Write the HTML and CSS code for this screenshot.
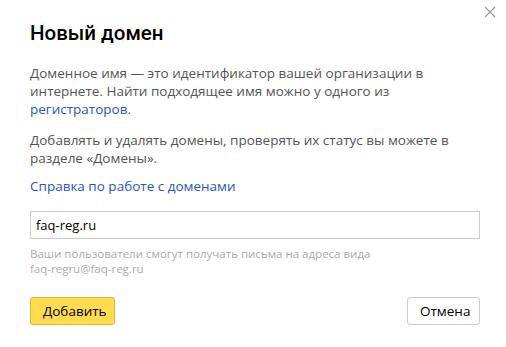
FILE: index.html
```html
<!DOCTYPE html>
<html lang="ru">
<head>
    <meta charset="UTF-8">
    <meta name="viewport" content="width=device-width, initial-scale=1.0">
    <title>Новый домен</title>
    <link rel="stylesheet" href="styles.css">
</head>
<body>
  <div class="dialog">
    <span class="close" title="Закрыть">
      <svg width="12" height="12" viewBox="0 0 12 12"><path d="M1 1L11 11M11 1L1 11" stroke="#999" stroke-width="1.1"/></svg>
    </span>
    <h1 class="title">Новый домен</h1>
    <p class="text">Доменное имя — это идентификатор вашей организации в интернете. Найти подходящее имя можно у одного из <a href="#">регистраторов</a>.</p>
    <p class="text">Добавлять и удалять домены, проверять их статус вы можете в разделе «Домены».</p>
    <p class="text help"><a href="#">Справка по работе с доменами</a></p>
    <input class="field" type="text" value="faq-reg.ru">
    <div class="hint">Ваши пользователи смогут получать письма на адреса вида<br>faq-regru@faq-reg.ru</div>
    <div class="actions">
      <button class="btn btn-add">Добавить</button>
      <button class="btn btn-cancel">Отмена</button>
    </div>
  </div>
</body>
</html>
```

FILE: styles.css
```css
body{
  margin:0;
  background:#fff;
  font-family:"Open Sans","Noto Sans",sans-serif;
}
.dialog{
  position:relative;
  width:450px;
  padding:19px 26px 20px 30px;
}
.close{
  position:absolute;
  right:10px;
  top:6px;
  width:12px;
  height:12px;
  cursor:pointer;
}
.close svg{ display:block; }
.title{
  margin:0 0 17px;
  font-family:Roboto,"Open Sans",sans-serif;
  font-size:20.5px;
  line-height:28px;
  font-weight:500;
  color:#000;
}
.text{
  margin:0 0 13px;
  font-size:13.5px;
  line-height:18px;
  color:#555;
}
.text.help{ margin-top:-3px; }
.text a{
  color:#2b55c5;
  text-decoration:none;
}
.field{
  display:block;
  box-sizing:border-box;
  width:450px;
  height:28px;
  margin-top:16px;
  padding:0 5px;
  border:1px solid #ccc;
  font-family:inherit;
  font-size:13px;
  color:#000;
  outline:none;
}
.hint{
  margin-top:7px;
  font-size:11.5px;
  line-height:15px;
  color:#aaa;
}
.actions{
  display:flex;
  justify-content:space-between;
  margin-top:21px;
}
.btn{
  height:28px;
  padding:0 12px;
  border-radius:3px;
  font-family:inherit;
  font-size:13.5px;
  color:#000;
  cursor:pointer;
}
.btn-add{
  width:85px;
  background:#ffdb4d;
  border:1px solid #d9b93f;
}
.btn-cancel{
  width:73px;
  background:#fff;
  border:1px solid #ccc;
}
```
